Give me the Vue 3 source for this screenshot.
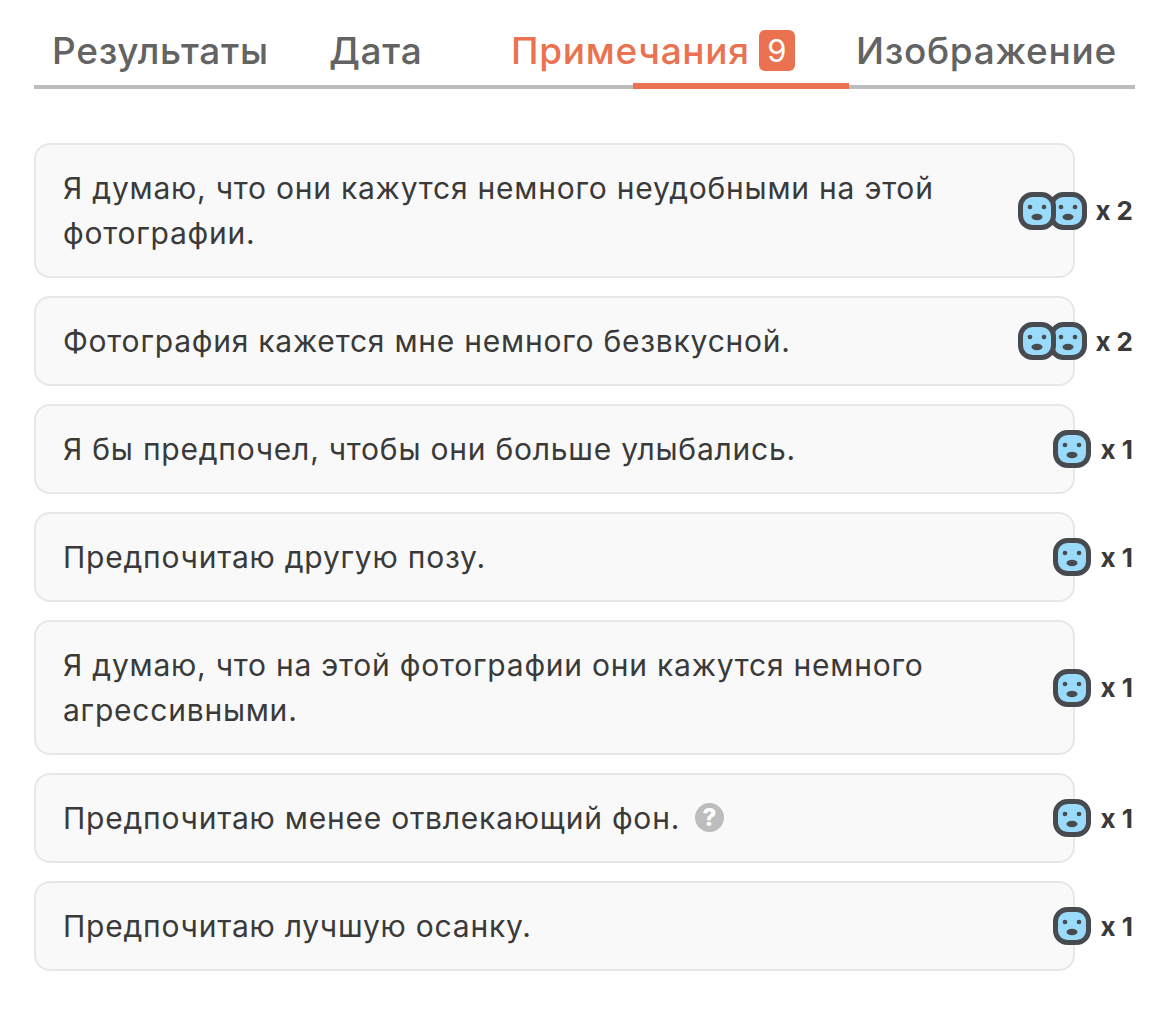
<script setup>
const tabs = [
  { label: 'Результаты', cls: 't1' },
  { label: 'Дата', cls: 't2' },
  { label: 'Примечания', cls: 't3 active', badge: 9 },
  { label: 'Изображение', cls: 't4' },
]
const rows = [
  { text: 'Я думаю, что они кажутся немного неудобными на этой фотографии.', count: 2 },
  { text: 'Фотография кажется мне немного безвкусной.', count: 2 },
  { text: 'Я бы предпочел, чтобы они больше улыбались.', count: 1 },
  { text: 'Предпочитаю другую позу.', count: 1 },
  { text: 'Я думаю, что на этой фотографии они кажутся немного агрессивными.', count: 1 },
  { text: 'Предпочитаю менее отвлекающий фон.', count: 1, help: true },
  { text: 'Предпочитаю лучшую осанку.', count: 1 },
]
</script>

<template>
  <div class="page">
    <nav class="tabs">
      <div v-for="t in tabs" :key="t.label" class="tab" :class="t.cls">
        <span>{{ t.label }}</span>
        <span v-if="t.badge" class="badge">{{ t.badge }}</span>
      </div>
      <div class="underline"></div>
    </nav>
    <div class="list">
      <div v-for="(r, i) in rows" :key="i" class="item">
        <div class="card">
          <span>{{ r.text }}</span>
          <span v-if="r.help" class="help">?</span>
        </div>
        <div class="react" :class="{ two: r.count === 2 }">
          <svg v-for="n in r.count" :key="n" class="face" :style="{ zIndex: 3 - n }" viewBox="0 0 38 38">
            <rect x="2.5" y="2.5" width="33" height="33" rx="12" fill="#9adafb" stroke="#474b50" stroke-width="5" />
            <circle cx="12" cy="15" r="2.3" fill="#474b50" />
            <circle cx="26" cy="15" r="2.3" fill="#474b50" />
            <ellipse cx="19" cy="25" rx="5.5" ry="3.3" fill="#474b50" />
          </svg>
          <span class="count">x {{ r.count }}</span>
        </div>
      </div>
    </div>
  </div>
</template>

<style scoped>
.page {
  width: 1170px;
  height: 1020px;
  box-sizing: border-box;
  padding: 0 35px 0 34px;
  font-family: Inter, "Liberation Sans", sans-serif;
  background: #fff;
  overflow: hidden;
}
.tabs {
  position: relative;
  display: flex;
  height: 89px;
  box-sizing: border-box;
  border-bottom: 4px solid #bdbdbd;
  color: #636363;
  font-size: 37px;
  font-weight: 500;
  letter-spacing: 0.7px;
  line-height: 42px;
}
.tab {
  display: flex;
  align-items: flex-start;
  padding-top: 30px;
  white-space: nowrap;
}
.t1 { margin-left: 18px; width: 277px; }
.t2 { width: 182px; }
.t3 { width: 345px; }
.active { color: #ea7250; }
.badge {
  margin: 0 0 0 9px;
  width: 36px;
  height: 41px;
  border-radius: 6px;
  background: #ea7250;
  color: #fff;
  font-size: 31px;
  font-weight: 400;
  letter-spacing: 0;
  line-height: 41px;
  text-align: center;
}
.underline {
  position: absolute;
  left: 599px;
  bottom: -4px;
  width: 216px;
  height: 6px;
  background: #ea7250;
}
.list {
  display: flex;
  flex-direction: column;
  gap: 18px;
  margin-top: 54px;
}
.item {
  display: flex;
  align-items: center;
  position: relative;
}
.card {
  width: 1041px;
  box-sizing: border-box;
  padding: 20.5px 130px 20.5px 27px;
  border: 2px solid #e7e7e7;
  border-radius: 16px;
  background: #f9f9f9;
  color: #3a3a3a;
  font-size: 30px;
  letter-spacing: 0.77px;
  line-height: 45px;
}
.help {
  display: inline-block;
  vertical-align: 3px;
  margin-left: 15px;
  width: 29px;
  height: 29px;
  border-radius: 50%;
  background: #bdbdbd;
  color: #fff;
  font-size: 24px;
  font-weight: 800;
  letter-spacing: 0;
  line-height: 29px;
  text-align: center;
}
.react {
  position: absolute;
  right: 2px;
  top: 50%;
  transform: translateY(-50%);
  display: flex;
  align-items: center;
}
.face {
  position: relative;
  width: 38px;
  height: 38px;
  flex: none;
}
.two .face + .face { margin-left: -7px; }
.count {
  margin-left: 10px;
  color: #3a3a3a;
  font-size: 26px;
  font-weight: 700;
  white-space: nowrap;
}
.two .count { margin-left: 8px; }
</style>
